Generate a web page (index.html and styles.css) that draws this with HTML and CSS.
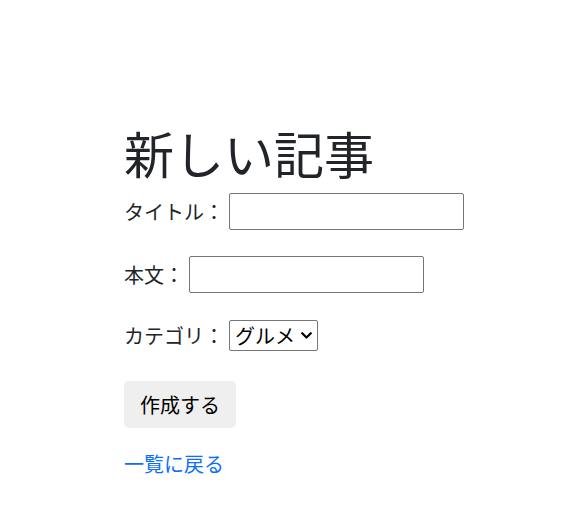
FILE: index.html
```html
<!DOCTYPE html>
<html lang="ja">
<head>
    <meta charset="UTF-8">
    <meta name="viewport" content="width=device-width, initial-scale=1.0">
    <title>新しい記事</title>
    <link rel="stylesheet" href="styles.css">
</head>
<body>
    <div class="container">
        <h1 class="title">新しい記事</h1>
        <form class="article-form">
            <div class="field field-title">
                <label class="field-label" for="title">タイトル：</label>
                <input id="title" class="text-input" type="text">
            </div>

            <div class="field field-body">
                <label class="field-label" for="body">本文：</label>
                <input id="body" class="text-input" type="text">
            </div>

            <div class="field field-category">
                <label class="field-label" for="category">カテゴリ：</label>
                <div class="select-wrap">
                    <select id="category" class="select">
                        <option>グルメ</option>
                        <option>旅行</option>
                        <option>日常</option>
                    </select>
                    <svg class="select-arrow" width="11" height="7" viewBox="0 0 11 7">
                        <path d="M1.2 1.2 L5.5 5.5 L9.8 1.2" fill="none" stroke="#000" stroke-width="2.2" stroke-linecap="round" stroke-linejoin="round"/>
                    </svg>
                </div>
            </div>

            <button type="submit" class="submit-button">作成する</button>
        </form>

        <a class="back-link" href="#">一覧に戻る</a>
    </div>
</body>
</html>
```

FILE: styles.css
```css
body {
    margin: 0;
    background-color: #fff;
    color: #212529;
    font-family: 'Noto Sans CJK JP', 'Noto Sans', sans-serif;
}

.container {
    padding: 125px 0 0 124px;
}

.title {
    margin: 0;
    font-size: 50px;
    font-weight: 400;
    line-height: 55px;
}

.article-form {
    display: flex;
    flex-direction: column;
    align-items: flex-start;
}

.field {
    display: flex;
    align-items: center;
}

.field-title {
    margin-top: 13px;
}

.field-body {
    margin-top: 26px;
}

.field-category {
    margin-top: 27px;
}

.field-label {
    font-size: 20px;
    margin-right: 5px;
}

.text-input {
    width: 235px;
    height: 37px;
    box-sizing: border-box;
    border: 1px solid #767676;
    border-radius: 2px;
    font-size: 18px;
    padding: 2px 4px;
}

.select-wrap {
    position: relative;
    display: flex;
}

.select {
    -webkit-appearance: none;
    appearance: none;
    width: 89px;
    height: 31px;
    box-sizing: border-box;
    border: 1px solid #767676;
    border-radius: 2px;
    font-family: 'Noto Sans CJK JP', sans-serif;
    font-size: 20px;
    line-height: 29px;
    color: #000;
    background-color: #fff;
    padding: 0 0 0 5px;
}

.select-arrow {
    position: absolute;
    right: 6px;
    top: 12px;
    pointer-events: none;
}

.submit-button {
    margin-top: 30px;
    width: 112px;
    height: 47px;
    border: none;
    border-radius: 5px;
    background-color: #efefef;
    color: #000;
    font-family: 'Noto Sans CJK JP', sans-serif;
    font-size: 20px;
    padding: 0;
}

.back-link {
    display: inline-block;
    margin-top: 24px;
    font-size: 20px;
    line-height: 24px;
    color: #0d6efd;
    text-decoration: none;
}
```
